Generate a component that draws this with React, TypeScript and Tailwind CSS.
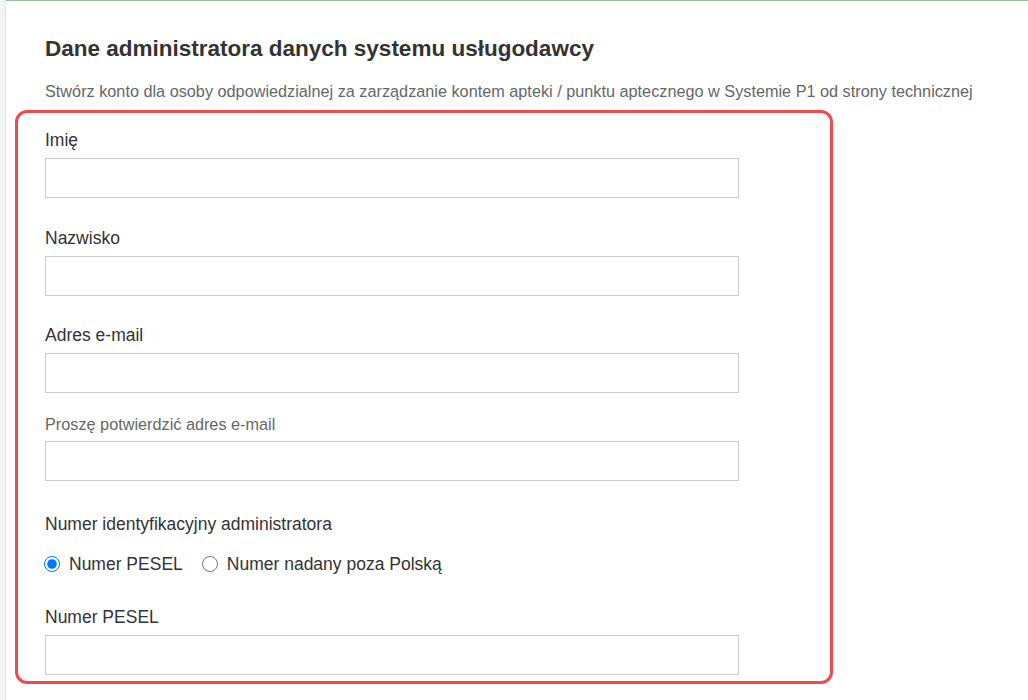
import { useState } from "react";

const font = { fontFamily: '"Liberation Sans", Arial, sans-serif' };

function Field({ label, small, className = "" }: { label: string; small?: boolean; className?: string }) {
  return (
    <div className={className}>
      <label
        className={
          small
            ? "block text-[16.25px] leading-[20px] text-[#666] mb-[7px]"
            : "block text-[17.5px] leading-[24px] text-[#333] mb-[6px]"
        }
      >
        {label}
      </label>
      <input type="text" className="block w-[694px] h-[40px] border border-[#ccc] bg-white outline-none px-3 text-[15px] text-[#333]" />
    </div>
  );
}

export default function App() {
  const [idType, setIdType] = useState<"pesel" | "foreign">("pesel");

  return (
    <div className="flex min-h-[700px] bg-white" style={font}>
      <div className="w-[6px] shrink-0 bg-[#f4f4f4] border-r border-[#e2e2e2]" />
      <div className="flex-1 border-t border-[#9cbf9c] pl-[9px] pt-[36px] pb-4">
        <h1 className="ml-[30px] text-[22.5px] leading-[24px] font-bold text-[#333]">
          Dane administratora danych systemu usługodawcy
        </h1>
        <p className="ml-[30px] mt-[20px] text-[16.25px] leading-[20px] text-[#666]">
          Stwórz konto dla osoby odpowiedzialnej za zarządzanie kontem apteki / punktu aptecznego w Systemie P1 od strony technicznej
        </p>

        {/* highlighted section */}
        <div className="mt-[9px] w-[818px] border-[3px] border-[#ef4b4f] rounded-[12px] pl-[26px] pt-[15px] pb-[6px]">
          <Field label="Imię" className="pl-px" />
          <Field label="Nazwisko" className="mt-[28px] pl-px" />
          <Field label="Adres e-mail" className="mt-[27px] pl-px" />
          <Field label="Proszę potwierdzić adres e-mail" small className="mt-[21px] pl-px" />

          <div className="mt-[31px] pl-px text-[17.5px] leading-[24px] text-[#333]">Numer identyfikacyjny administratora</div>
          <div className="mt-[16px] flex items-center h-[24px] text-[17.5px] text-[#333]">
            <label className="flex items-center">
              <input
                type="radio"
                name="idType"
                checked={idType === "pesel"}
                onChange={() => setIdType("pesel")}
                className="m-0 w-[16px] h-[16px] accent-[#0075ff]"
              />
              <span className="ml-[9px]">Numer PESEL</span>
            </label>
            <label className="flex items-center ml-[19px]">
              <input
                type="radio"
                name="idType"
                checked={idType === "foreign"}
                onChange={() => setIdType("foreign")}
                className="m-0 w-[16px] h-[16px] accent-[#0075ff]"
              />
              <span className="ml-[9px]">Numer nadany poza Polską</span>
            </label>
          </div>

          <Field label="Numer PESEL" className="mt-[29px] pl-px" />
        </div>
      </div>
    </div>
  );
}
